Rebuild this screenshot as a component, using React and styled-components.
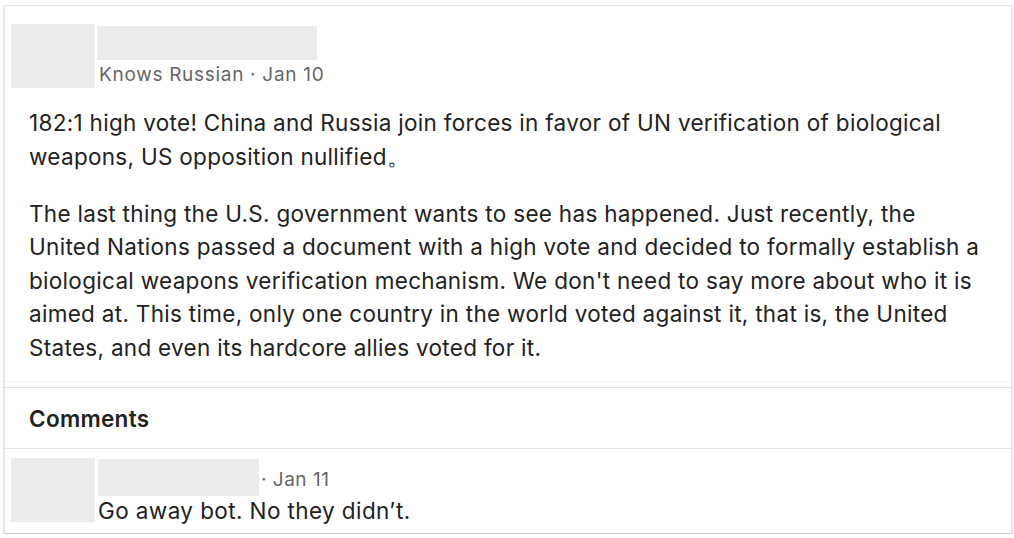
import React from "react";
import styled, { createGlobalStyle } from "styled-components";

const Global = createGlobalStyle`
  html, body { margin: 0; padding: 0; background: #ffffff; }
  body { font-family: Inter, "Liberation Sans", Arial, sans-serif; }
`;

const Card = styled.div`
  margin: 5px 2px 0 4px;
  height: 529px;
  box-sizing: border-box;
  border: 1px solid #e4e4e4;
  border-bottom: 1px solid #c8c8c8;
  box-shadow: 0 2px 2px rgba(0, 0, 0, 0.25);
  background: #fff;
  display: flex;
  flex-direction: column;
`;

const Post = styled.section`
  padding: 18px 0 17px 6px;
  border-bottom: 1px solid #f0f0f0;
  margin-right: 3px;
`;

const Header = styled.div`
  display: flex;
  gap: ${(p) => p.$gap}px;
`;

const Avatar = styled.div`
  width: 84px;
  height: 64px;
  background: #ebebeb;
  flex: none;
`;

const NameCol = styled.div`
  display: flex;
  flex-direction: column;
  padding-top: ${(p) => p.$top}px;
`;

const NameBox = styled.div`
  width: ${(p) => p.$w}px;
  height: ${(p) => p.$h}px;
  background: #ebebeb;
`;

const Meta = styled.div`
  font-size: 19px;
  line-height: 22px;
  letter-spacing: 0.7px;
  color: #666666;
  margin-top: 4px;
  padding-left: 2px;
`;

const Body = styled.div`
  padding: 18px 24px 0 18px;
`;

const Para = styled.p`
  margin: 0;
  font-size: 22.5px;
  line-height: 33.5px;
  letter-spacing: 0.3px;
  color: #222222;
  white-space: nowrap;
  & + & {
    margin-top: 23.5px;
  }
`;

const CommentsHead = styled.div`
  margin-top: 5px;
  border-top: 1px solid #e2e2e2;
  border-bottom: 1px solid #e2e2e2;
  padding: 19px 24px 17px 24px;
  font-size: 22.5px;
  line-height: 24px;
  letter-spacing: 0.3px;
  font-weight: 600;
  color: #222222;
`;

const Comment = styled.div`
  display: flex;
  gap: 3px;
  padding: 9px 0 0 6px;
`;

const CommentBody = styled.div`
  display: flex;
  flex-direction: column;
  padding-top: 1px;
`;

const CommentTop = styled.div`
  display: flex;
  align-items: flex-end;
`;

const CommentMeta = styled.span`
  font-size: 19px;
  line-height: 20px;
  letter-spacing: 0.5px;
  color: #666666;
  margin: 0 0 6px 2px;
`;

const CommentText = styled.div`
  font-size: 22.5px;
  line-height: 26px;
  letter-spacing: 0.4px;
  color: #222222;
  margin-top: 2px;
`;

export default function App() {
  return (
    <>
      <Global />
      <Card>
        <Post>
          <Header $gap={2}>
            <Avatar />
            <NameCol $top={2}>
              <NameBox $w={220} $h={34} />
              <Meta>Knows Russian · Jan 10</Meta>
            </NameCol>
          </Header>
          <Body>
            <Para>
              182:1 high vote! China and Russia join forces in favor of UN verification of biological
              <br />
              weapons, US opposition nullified。
            </Para>
            <Para>
              The last thing the U.S. government wants to see has happened. Just recently, the
              <br />
              United Nations passed a document with a high vote and decided to formally establish a
              <br />
              biological weapons verification mechanism. We don't need to say more about who it is
              <br />
              aimed at. This time, only one country in the world voted against it, that is, the United
              <br />
              States, and even its hardcore allies voted for it.
            </Para>
          </Body>
        </Post>
        <CommentsHead>Comments</CommentsHead>
        <Comment>
          <Avatar />
          <CommentBody>
            <CommentTop>
              <NameBox $w={161} $h={37} />
              <CommentMeta>· Jan 11</CommentMeta>
            </CommentTop>
            <CommentText>Go away bot. No they didn’t.</CommentText>
          </CommentBody>
        </Comment>
      </Card>
    </>
  );
}
